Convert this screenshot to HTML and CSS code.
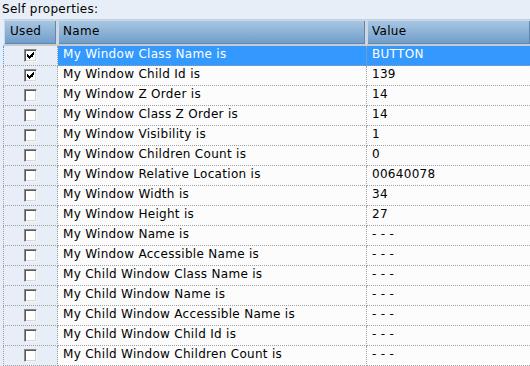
FILE: index.html
```html
<!DOCTYPE html>
<html lang="en">
<head>
    <meta charset="UTF-8">
    <title>Self properties</title>
    <link rel="stylesheet" href="styles.css">
</head>
<body>
    <svg class="defs" width="0" height="0">
        <symbol id="tick" viewBox="0 0 7 7">
            <path d="M6 0h1v3h-1zM5 1h1v4h-1zM4 2h1v3h-1zM3 3h1v3h-1zM2 4h1v3h-1zM1 3h1v3h-1zM0 2h1v3h-1z" fill="#000"/>
        </symbol>
    </svg>

    <div class="caption">Self properties:</div>

    <table class="props">
        <colgroup>
            <col class="col-used">
            <col class="col-name">
            <col>
        </colgroup>
        <thead>
            <tr>
                <th>Used</th>
                <th>Name</th>
                <th>Value</th>
            </tr>
        </thead>
        <tbody>
            <tr class="selected">
                <td class="used"><span class="cb"><svg viewBox="0 0 7 7"><use href="#tick"/></svg></span></td>
                <td>My Window Class Name is</td>
                <td>BUTTON</td>
            </tr>
            <tr>
                <td class="used"><span class="cb"><svg viewBox="0 0 7 7"><use href="#tick"/></svg></span></td>
                <td>My Window Child Id is</td>
                <td>139</td>
            </tr>
            <tr>
                <td class="used"><span class="cb"></span></td>
                <td>My Window Z Order is</td>
                <td>14</td>
            </tr>
            <tr>
                <td class="used"><span class="cb"></span></td>
                <td>My Window Class Z Order is</td>
                <td>14</td>
            </tr>
            <tr>
                <td class="used"><span class="cb"></span></td>
                <td>My Window Visibility is</td>
                <td>1</td>
            </tr>
            <tr>
                <td class="used"><span class="cb"></span></td>
                <td>My Window Children Count is</td>
                <td>0</td>
            </tr>
            <tr>
                <td class="used"><span class="cb"></span></td>
                <td>My Window Relative Location is</td>
                <td>00640078</td>
            </tr>
            <tr>
                <td class="used"><span class="cb"></span></td>
                <td>My Window Width is</td>
                <td>34</td>
            </tr>
            <tr>
                <td class="used"><span class="cb"></span></td>
                <td>My Window Height is</td>
                <td>27</td>
            </tr>
            <tr>
                <td class="used"><span class="cb"></span></td>
                <td>My Window Name is</td>
                <td>- - -</td>
            </tr>
            <tr>
                <td class="used"><span class="cb"></span></td>
                <td>My Window Accessible Name is</td>
                <td>- - -</td>
            </tr>
            <tr>
                <td class="used"><span class="cb"></span></td>
                <td>My Child Window Class Name is</td>
                <td>- - -</td>
            </tr>
            <tr>
                <td class="used"><span class="cb"></span></td>
                <td>My Child Window Name is</td>
                <td>- - -</td>
            </tr>
            <tr>
                <td class="used"><span class="cb"></span></td>
                <td>My Child Window Accessible Name is</td>
                <td>- - -</td>
            </tr>
            <tr>
                <td class="used"><span class="cb"></span></td>
                <td>My Child Window Child Id is</td>
                <td>- - -</td>
            </tr>
            <tr>
                <td class="used"><span class="cb"></span></td>
                <td>My Child Window Children Count is</td>
                <td>- - -</td>
            </tr>
        </tbody>
    </table>
</body>
</html>
```

FILE: styles.css
```css
body {
    margin: 0;
    padding: 0;
    background-color: #e8eef7;
    font-family: "DejaVu Sans", Verdana, sans-serif;
    font-size: 12px;
    letter-spacing: 0.3px;
    color: #000;
    overflow: hidden;
}
.defs {
    position: absolute;
}
.caption {
    height: 19px;
    line-height: 19px;
    padding-left: 2px;
    color: #000;
}
.props {
    margin-left: 3px;
    width: 527px;
    table-layout: fixed;
    border-collapse: separate;
    border-spacing: 0;
}
.col-used {
    width: 55px;
}
.col-name {
    width: 309px;
}
.props th {
    height: 22px;
    padding: 0 5px 2px;
    line-height: 22px;
    text-align: left;
    font-weight: normal;
    white-space: nowrap;
    background: linear-gradient(#abc8e3, #6f9cc9);
    border-top: 1px solid #c3d2e1;
    border-bottom: 2px solid #c6cacf;
    border-right: 2px solid #d3d7db;
    box-shadow: inset 1px 1px 0 #c4d9ec, inset -1px -1px 0 #5f88b0;
}
.props th:first-child {
    border-left: 1px solid #e8eef7;
    padding-left: 6px;
}
.props th:last-child {
    border-right: none;
}
.props td {
    height: 17px;
    padding: 0 5px 2px;
    line-height: 17px;
    white-space: nowrap;
    overflow: hidden;
    background-color: #fcfcfc;
    border-bottom: 1px dotted #a0a0a0;
    border-right: 1px dotted #a0a0a0;
}
.props td:last-child {
    border-right: none;
}
.props td.used {
    padding: 0 0 2px;
    background-color: #e8eef7;
    border-left: 1px dotted #a0a0a0;
}
.selected td {
    background-color: #3399ff;
    color: #fff;
}
.selected td.used {
    background-color: #e8eef7;
    border-left-color: #3399ff;
}
.cb {
    display: block;
    box-sizing: border-box;
    width: 13px;
    height: 13px;
    margin: 3px auto 1px;
    padding: 3px 0 0 3px;
    background-color: #fff;
    border: 1px solid;
    border-color: #8a8a8a #f4f4f4 #f4f4f4 #8a8a8a;
    box-shadow: inset 1px 1px 0 #5a5a5a, inset -1px -1px 0 #d8d8d8;
}
.cb svg {
    display: block;
    width: 7px;
    height: 7px;
    margin-top: -1px;
    margin-left: -1px;
    shape-rendering: crispEdges;
}
```
